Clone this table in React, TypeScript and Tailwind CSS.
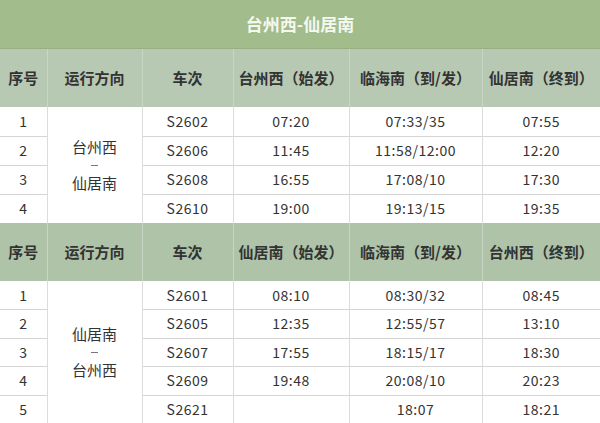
import React from 'react';

type Row = [string, string, string, string, string];

const cols = [47, 95, 91, 116, 133, 118];

const groups: { heads: string[]; dir: [string, string]; rows: Row[]; headBg: string }[] = [
  {
    heads: ['序号', '运行方向', '车次', '台州西（始发）', '临海南（到/发）', '仙居南（终到）'],
    dir: ['台州西', '仙居南'],
    headBg: 'bg-[#b8c9b3]',
    rows: [
      ['1', 'S2602', '07:20', '07:33/35', '07:55'],
      ['2', 'S2606', '11:45', '11:58/12:00', '12:20'],
      ['3', 'S2608', '16:55', '17:08/10', '17:30'],
      ['4', 'S2610', '19:00', '19:13/15', '19:35'],
    ],
  },
  {
    heads: ['序号', '运行方向', '车次', '仙居南（始发）', '临海南（到/发）', '台州西（终到）'],
    dir: ['仙居南', '台州西'],
    headBg: 'bg-[#aec3a8]',
    rows: [
      ['1', 'S2601', '08:10', '08:30/32', '08:45'],
      ['2', 'S2605', '12:35', '12:55/57', '13:10'],
      ['3', 'S2607', '17:55', '18:15/17', '18:30'],
      ['4', 'S2609', '19:48', '20:08/10', '20:23'],
      ['5', 'S2621', '', '18:07', '18:21'],
    ],
  },
];

export default function App() {
  return (
    <div className="w-[600px] h-[423px] overflow-hidden bg-white font-['Noto_Sans_CJK_SC',sans-serif] text-[#333]">
      <div className="h-[49px] bg-[#a3bc8c] border-b border-[#97b082] flex items-center justify-center text-[17px] font-bold text-[#f4f8ee]">
        台州西-仙居南
      </div>
      <table className="table-fixed border-collapse w-[600px]">
        <colgroup>
          {cols.map((w, i) => (
            <col key={i} style={{ width: w }} />
          ))}
        </colgroup>
        {groups.map((g, gi) => (
          <tbody key={gi}>
            <tr className={`h-[58px] ${g.headBg}`}>
              {g.heads.map((h, i) => (
                <th
                  key={i}
                  className={`text-[15px] font-bold text-[#333] text-center whitespace-nowrap p-0 ${i > 0 ? 'border-l border-[#c9d6c5]' : ''}`}
                >
                  {h}
                </th>
              ))}
            </tr>
            {g.rows.map((r, ri) => (
              <tr key={ri} className={`${gi === 0 ? 'h-[29px]' : 'h-[28.5px]'} text-[14px] text-center`}>
                <td className={`p-0 ${ri > 0 ? 'border-t border-[#d4d4d4]' : ''}`}>{r[0]}</td>
                {ri === 0 && (
                  <td rowSpan={g.rows.length} className="p-0 border-l border-[#dcdcdc] text-[15px]">
                    <div className="flex flex-col items-center">
                      <span className="leading-[20px]">{g.dir[0]}</span>
                      <span className="h-[16px] flex items-center">
                        <span className="block w-[7px] h-px bg-[#777]" />
                      </span>
                      <span className="leading-[20px]">{g.dir[1]}</span>
                    </div>
                  </td>
                )}
                {r.slice(1).map((c, ci) => (
                  <td
                    key={ci}
                    className={`p-0 border-l border-[#dcdcdc] tracking-[0.5px] ${ri > 0 ? 'border-t border-t-[#d4d4d4]' : ''}`}
                  >
                    {c}
                  </td>
                ))}
              </tr>
            ))}
          </tbody>
        ))}
      </table>
    </div>
  );
}
